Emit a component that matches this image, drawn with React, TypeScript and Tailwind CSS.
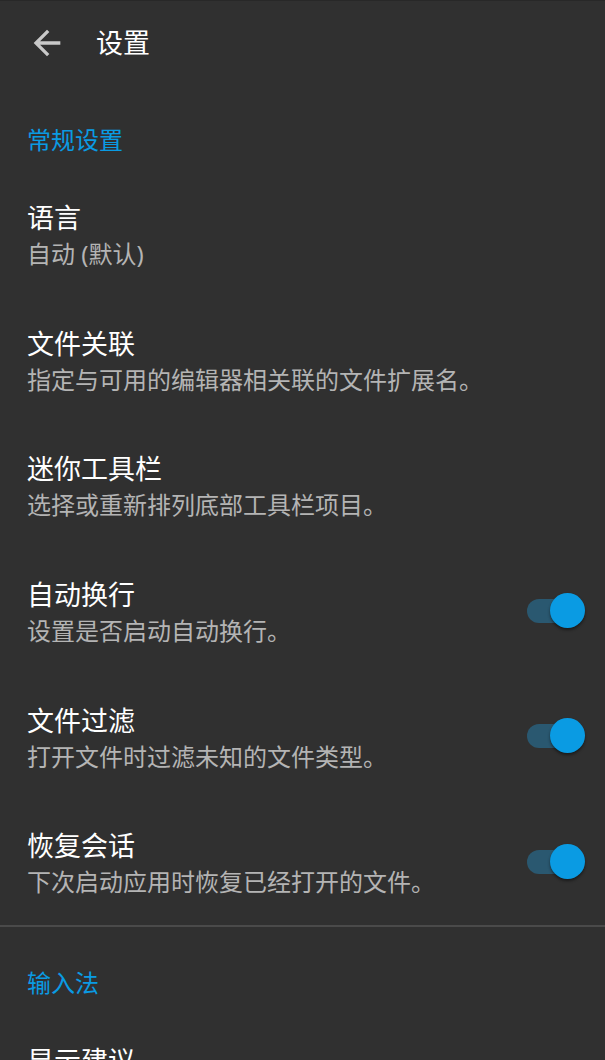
import React from "react";

const font = { fontFamily: '"Noto Sans", "Noto Sans CJK SC", sans-serif' };

function Toggle() {
  return (
    <div className="relative w-[60px] h-[36px] shrink-0">
      <div className="absolute left-[1px] top-[6px] w-[56px] h-[24px] rounded-full bg-[#2a5870]" />
      <div className="absolute left-[24px] top-[0px] w-[35px] h-[35px] rounded-full bg-[#0a9be3] shadow-[0_2px_3px_rgba(0,0,0,0.45)]" />
    </div>
  );
}

function Row({ title, sub, toggle }: { title: string; sub: string; toggle?: boolean }) {
  return (
    <div className="flex items-center pl-[27px] pr-[19px] h-[125.6px]">
      <div className="flex-1 flex flex-col mt-[5px]">
        <div className="text-[27px] leading-[36px] text-white">{title}</div>
        <div className="text-[24px] leading-[36px] text-[#b4b4b4]">{sub}</div>
      </div>
      {toggle && <Toggle />}
    </div>
  );
}

function Section({ title }: { title: string }) {
  return (
    <div className="pl-[27px] pt-[40px] pb-[15px]">
      <div className="text-[24px] leading-[32px] text-[#0a9be3]">{title}</div>
    </div>
  );
}

export default function App() {
  return (
    <div className="w-[605px] h-[1060px] overflow-hidden bg-[#303030] border-t border-[#282828]" style={font}>
      <div className="h-[83px] flex items-center">
        <div className="w-[96px] flex items-center pl-[27px]">
          <svg width="40" height="40" viewBox="0 0 24 24" fill="#c8c8c8">
            <path d="M20 11H7.83l5.59-5.59L12 4l-8 8 8 8 1.41-1.41L7.83 13H20v-2z" />
          </svg>
        </div>
        <div className="text-[27px] leading-[36px] text-white">设置</div>
      </div>
      <Section title="常规设置" />
      <Row title="语言" sub="自动 (默认)" />
      <Row title="文件关联" sub="指定与可用的编辑器相关联的文件扩展名。" />
      <Row title="迷你工具栏" sub="选择或重新排列底部工具栏项目。" />
      <Row title="自动换行" sub="设置是否启动自动换行。" toggle />
      <Row title="文件过滤" sub="打开文件时过滤未知的文件类型。" toggle />
      <Row title="恢复会话" sub="下次启动应用时恢复已经打开的文件。" toggle />
      <div className="h-[2px] bg-[#4a4a4a]" />
      <Section title="输入法" />
      <Row title="显示建议" sub="在输入时显示单词建议。" />
    </div>
  );
}
